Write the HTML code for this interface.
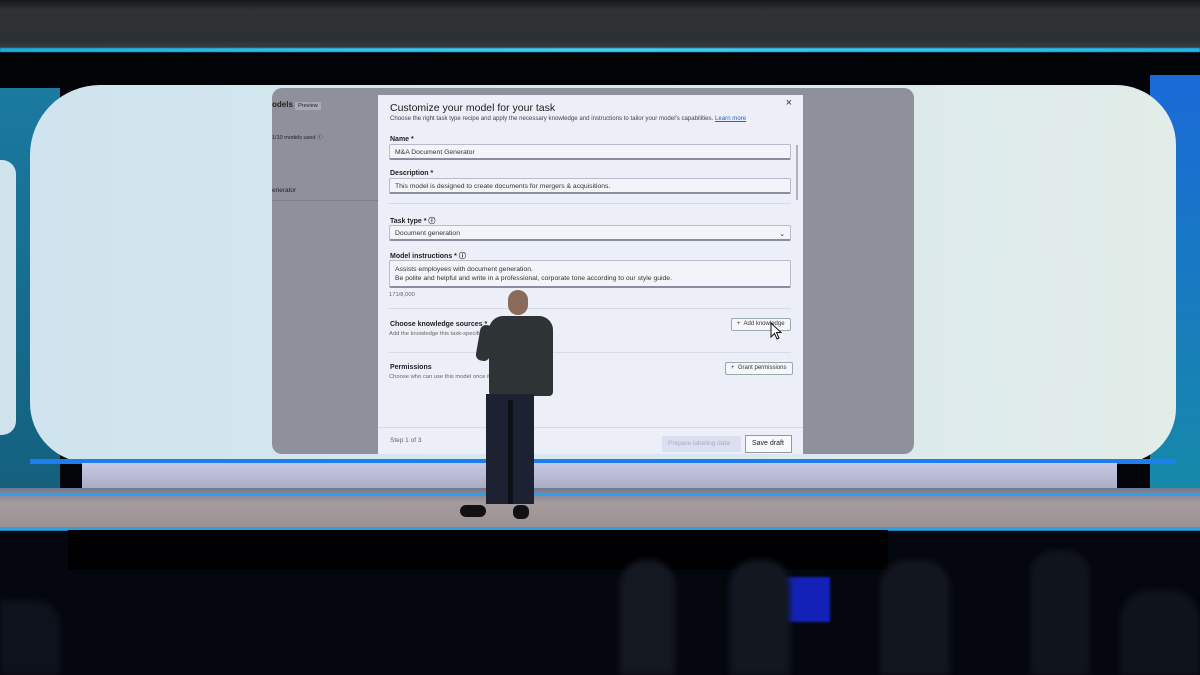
<!DOCTYPE html>
<html><head><meta charset="utf-8"><style>
*{margin:0;padding:0;box-sizing:border-box}
body{width:1200px;height:675px;overflow:hidden;background:#04050a;position:relative;font-family:"Liberation Sans",sans-serif}
.a{position:absolute}
.lbl{position:absolute;left:12px;font-size:7px;font-weight:bold;color:#222}
.inp{position:absolute;left:11px;width:402px;height:16px;border:1px solid #b8bcc8;border-bottom:2px solid #8a8fa0;background:#f3f4f9;border-radius:2px;font-size:6.8px;color:#333;padding:4px 5px}
.btn{position:absolute;height:13px;border:1px solid #9aa;background:#f6f7fb;font-size:6px;color:#333;padding:2px 5px;border-radius:2px}
.sm{position:absolute;left:11px;font-size:5.8px;color:#666}
.sil{position:absolute;filter:blur(3px)}
</style></head><body>
<div class="a" style="left:0;top:0;width:1200px;height:52px;background:linear-gradient(#15171a 0,#2f3336 10px,#2c3033 40px,#3a3f43 50px)"></div>
<div class="a" style="left:0;top:48px;width:1200px;height:4px;background:linear-gradient(90deg,#1ab0e0,#40d0f4 50%,#20b8ee);filter:blur(0.6px)"></div>
<div class="a" style="left:0;top:53px;width:1200px;height:37px;background:#020306"></div>
<div class="a" style="left:0;top:88px;width:60px;height:400px;background:linear-gradient(#1a7aa0,#14607e)"></div>
<div class="a" style="left:1150px;top:75px;width:50px;height:420px;background:linear-gradient(#1a6ad8,#168aa8)"></div>
<div class="a" style="left:0;top:160px;width:16px;height:275px;background:#cfe3ec;border-radius:0 14px 14px 0"></div>
<div class="a" style="left:30px;top:85px;width:1146px;height:378px;background:linear-gradient(90deg,#cfe4ee,#d9e9f0 60%,#e2ece8);border-radius:70px 60px 55px 60px"></div>
<div class="a" style="left:272px;top:88px;width:642px;height:366px;background:#8e919c;border-radius:10px"></div>
<div class="a" style="left:272px;top:100px;font-size:8px;font-weight:bold;color:#222">odels <span style="background:#a7aab4;font-weight:normal;font-size:5.5px;padding:1px 3px">Preview</span></div>
<div class="a" style="left:272px;top:133px;font-size:5.5px;color:#222">1/10 models used ⓘ</div>
<div class="a" style="left:272px;top:187px;font-size:6.5px;color:#222">enerator</div>
<div class="a" style="left:272px;top:200px;width:106px;height:1px;background:#7d808a"></div>
<div class="a" style="left:378px;top:95px;width:425px;height:359px;background:#eceff7">
 <div class="a" style="left:12px;top:7px;font-size:10.5px;color:#1a1a1a">Customize your model for your task</div>
 <div class="a" style="right:11px;top:2px;font-size:11px;color:#333">×</div>
 <div class="a" style="left:12px;top:20px;font-size:6.1px;color:#444;white-space:nowrap">Choose the right task type recipe and apply the necessary knowledge and instructions to tailor your model's capabilities. <span style="color:#2a5fc8;text-decoration:underline">Learn more</span></div>
 <div class="lbl" style="top:41px">Name *</div>
 <div class="inp" style="top:49px">M&amp;A Document Generator</div>
 <div class="lbl" style="top:75px">Description *</div>
 <div class="inp" style="top:83px">This model is designed to create documents for mergers &amp; acquisitions.</div>
 <div class="a" style="left:11px;top:108px;width:402px;height:1px;background:#d8dae2"></div>
 <div class="a" style="left:418px;top:50px;width:2px;height:55px;background:#b0b3bd"></div>
 <div class="lbl" style="top:121px">Task type * ⓘ</div>
 <div class="inp" style="top:130px">Document generation<span style="float:right">⌄</span></div>
 <div class="lbl" style="top:156px">Model instructions * ⓘ</div>
 <div class="inp" style="top:165px;height:28px;line-height:9px">Assists employees with document generation.<br>Be polite and helpful and write in a professional, corporate tone according to our style guide.</div>
 <div class="sm" style="top:197px">171/8,000</div>
 <div class="a" style="left:11px;top:213px;width:402px;height:1px;background:#d8dae2"></div>
 <div class="lbl" style="top:226px">Choose knowledge sources *</div>
 <div class="sm" style="top:236px">Add the knowledge this task-specific model needs for training</div>
 <div class="btn" style="left:353px;top:223px">+&nbsp; Add knowledge</div>
 <div class="a" style="left:11px;top:257px;width:402px;height:1px;background:#d8dae2"></div>
 <div class="lbl" style="top:269px">Permissions</div>
 <div class="sm" style="top:279px">Choose who can use this model once it's published</div>
 <div class="btn" style="left:347px;top:267px">+&nbsp; Grant permissions</div>
 <div class="a" style="left:0;top:332px;width:425px;height:1px;background:#d8dae2"></div>
 <div class="a" style="left:12px;top:342px;font-size:6.5px;color:#666">Step 1 of 3</div>
 <div class="a" style="left:284px;top:341px;width:79px;height:16px;background:#dcdff0;font-size:6.5px;color:#a8acc4;padding:4px 6px">Prepare labeling data</div>
 <div class="a" style="left:367px;top:340px;width:47px;height:18px;background:#f8f9fc;border:1px solid #999;font-size:7px;color:#222;padding:4px 6px">Save draft</div>
</div>
<svg class="a" style="left:770px;top:322px" width="14" height="20"><path d="M1 1 L1 15 L4.5 11.5 L7 17 L9 16 L6.5 10.5 L11 10.5 Z" fill="#fff" stroke="#111" stroke-width="1"/></svg>
<div class="a" style="left:30px;top:459px;width:1146px;height:5px;background:#1d7ef0"></div>
<div class="a" style="left:82px;top:463px;width:1035px;height:26px;background:linear-gradient(#c7c9e2,#a9adc4)"></div>
<div class="a" style="left:0;top:488px;width:1200px;height:42px;background:linear-gradient(#6d7a92,#a59a9c 15px,#9c9192)"></div>
<div class="a" style="left:0;top:493px;width:1200px;height:3px;background:#2aa0f0"></div>
<div class="a" style="left:0;top:527px;width:1200px;height:4px;background:#1fa0e8;opacity:.8"></div>
<div class="a" style="left:0;top:531px;width:1200px;height:144px;background:#05070e"></div>
<div class="a" style="left:68px;top:530px;width:820px;height:40px;background:#010103"></div>
<div class="a" style="left:735px;top:577px;width:95px;height:45px;background:#1222b8;filter:blur(1px)"></div>
<div class="sil" style="left:620px;top:560px;width:55px;height:115px;background:#141821;border-radius:25px 25px 0 0"></div>
<div class="sil" style="left:730px;top:560px;width:60px;height:115px;background:#121720;border-radius:25px 25px 0 0"></div>
<div class="sil" style="left:880px;top:560px;width:70px;height:115px;background:#12161e;border-radius:28px 28px 0 0"></div>
<div class="sil" style="left:1030px;top:550px;width:60px;height:125px;background:#10141c;border-radius:25px 25px 0 0"></div>
<div class="sil" style="left:1120px;top:590px;width:80px;height:85px;background:#0f131b;border-radius:30px 30px 0 0"></div>
<div class="sil" style="left:0;top:600px;width:60px;height:75px;background:#0e121c;border-radius:0 25px 0 0"></div>
<!-- person -->
<div class="a" style="left:508px;top:290px;width:20px;height:25px;background:#8a6a58;border-radius:10px"></div>
<div class="a" style="left:489px;top:316px;width:64px;height:80px;background:#2e3436;border-radius:14px 14px 4px 4px"></div>
<div class="a" style="left:478px;top:325px;width:14px;height:36px;background:#2e3436;border-radius:6px;transform:rotate(10deg)"></div>
<div class="a" style="left:486px;top:394px;width:48px;height:110px;background:#1d2233"></div>
<div class="a" style="left:508px;top:400px;width:5px;height:104px;background:#0e1018"></div>
<div class="a" style="left:460px;top:505px;width:26px;height:12px;background:#111;border-radius:6px"></div>
<div class="a" style="left:513px;top:505px;width:16px;height:14px;background:#111;border-radius:6px"></div>
</body></html>
